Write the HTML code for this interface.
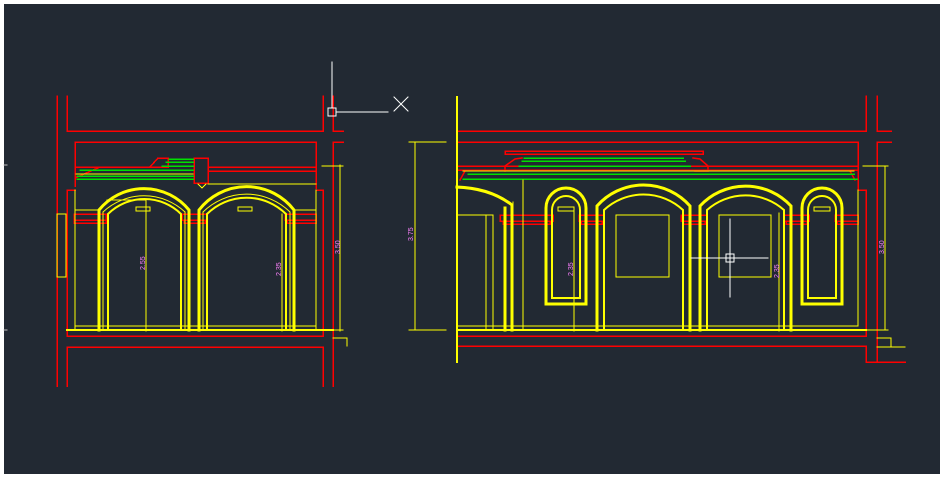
<!DOCTYPE html>
<html><head><meta charset="utf-8"><style>
html,body{margin:0;padding:0;background:#fff;}
svg{display:block}
text{font-family:"Liberation Sans",sans-serif;font-size:7px;fill:#ff80ff}
</style></head><body>
<svg width="944" height="478" viewBox="0 0 944 478" xmlns="http://www.w3.org/2000/svg">
<rect x="4" y="4" width="936" height="470" fill="#222933"/>
<g fill="none" stroke-linecap="square">
<g stroke="#ff0000" stroke-width="1.5" shape-rendering="crispEdges">
<line x1="57" y1="96" x2="57" y2="386"/>
<polyline points="67,96 67,131 323,131 323,96"/>
<polyline points="333,96 333,131 343,131"/>
<polyline points="75,186 75,142 316,142 316,188"/>
<polyline points="67,331 67,190 75,190"/>
<polyline points="316,190 323,190 323,336 67,336 67,331"/>
<polyline points="67,386 67,347 323,347 323,386"/>
<polyline points="343,142 333,142 333,386"/>
<polyline points="75,167 100,167 75,178 75,185"/>
<polyline points="100,167 150,167 158,158 168,158 168,167 150,167"/>
<polyline points="194,158 194,183 208,183 208,158 194,158"/>
<line x1="208" y1="167" x2="316" y2="167"/><line x1="208" y1="171" x2="316" y2="171"/>
<rect x="74" y="214" width="32" height="6"/><rect x="74" y="220" width="32" height="3"/>
<rect x="182" y="214" width="25" height="6"/><rect x="184" y="220" width="21" height="3"/>
<rect x="285" y="214" width="31" height="6"/><rect x="287" y="220" width="29" height="3"/>
</g>
<g stroke="#00e000" stroke-width="1.5" shape-rendering="crispEdges">
<line x1="169" y1="159" x2="193" y2="159"/><line x1="166" y1="162" x2="193" y2="162"/><line x1="162" y1="166" x2="193" y2="166"/>
<line x1="80" y1="170" x2="193" y2="170"/><line x1="77" y1="176" x2="193" y2="176"/><line x1="77" y1="179" x2="193" y2="179"/>
</g>
<g stroke="#ffff00" stroke-width="1" shape-rendering="crispEdges">
<line x1="76" y1="174" x2="193" y2="174"/><line x1="208" y1="184" x2="316" y2="184"/>
<polyline points="198,184 202,188 206,184"/>
<rect x="57" y="214" width="9" height="63"/>
<polyline points="75,190 75,330"/><polyline points="316,190 316,330"/>
<line x1="75" y1="210" x2="98" y2="210"/><line x1="294" y1="210" x2="316" y2="210"/>
<line x1="75" y1="326" x2="316" y2="326"/>
<rect x="136" y="207" width="14" height="4"/><rect x="238" y="207" width="14" height="4"/>
<line x1="146" y1="199" x2="146" y2="331"/><line x1="107" y1="200" x2="146" y2="200"/>
<line x1="282" y1="214" x2="282" y2="331"/>
<line x1="322" y1="166" x2="343" y2="166"/><line x1="322" y1="330" x2="343" y2="330"/>
<line x1="340" y1="165" x2="340" y2="331"/>
<polyline points="333,338 347,338 347,346"/>
<line x1="100" y1="229" x2="100" y2="330"/><line x1="188" y1="222" x2="188" y2="330"/>
<line x1="286" y1="222" x2="286" y2="330"/>
</g>
<g stroke="#ffff00" stroke-width="1">
<path d="M103,330 V212 A60 60 0 0 1 185,212 V330"/>
<path d="M203,330 V212 A62 62 0 0 1 290,212 V330"/>
</g>
<g stroke="#ffff00" stroke-width="3">
<path d="M99,330 V210 A58 58 0 0 1 189,210 V330" />
<path d="M199,330 V210 A60 60 0 0 1 294,210 V330" />
<path d="M108,330 V214 A52 52 0 0 1 181,214 V330" stroke-width="2"/>
<path d="M207,330 V214 A56 56 0 0 1 286,214 V330" stroke-width="2"/>
<line x1="67" y1="330" x2="333" y2="330" stroke-width="2"/>
</g>

<g stroke="#ff0000" stroke-width="1.5" shape-rendering="crispEdges">
<polyline points="457,131 866,131 866,96"/>
<polyline points="877,96 877,131 891,131"/>
<polyline points="457,142 858,142 858,190 866,190 866,336 457,336"/>
<polyline points="457,346 866,346 866,362 905,362"/>
<polyline points="891,142 877,142 877,362"/>
<rect x="505" y="151" width="198" height="3"/>
<line x1="457" y1="166" x2="858" y2="166"/><line x1="457" y1="170" x2="858" y2="170"/>
<rect x="500" y="215" width="53" height="6"/><rect x="503" y="221" width="47" height="3"/>
<rect x="579" y="215" width="25" height="6"/><rect x="581" y="221" width="21" height="3"/>
<rect x="681" y="215" width="26" height="6"/><rect x="683" y="221" width="22" height="3"/>
<rect x="784" y="215" width="25" height="6"/><rect x="786" y="221" width="21" height="3"/>
<rect x="835" y="215" width="23" height="6"/><rect x="837" y="221" width="21" height="3"/>
</g>
<g stroke="#ff0000" stroke-width="1.5">
<polyline points="460,180 465,171"/><polyline points="855,180 850,171"/>
<polyline points="505,171 505,166 515,159 522,158"/><polyline points="693,158 700,159 708,166 708,171 695,171"/>
</g>
<g stroke="#00e000" stroke-width="1.5" shape-rendering="crispEdges">
<line x1="524" y1="158" x2="683" y2="158"/><line x1="522" y1="161" x2="685" y2="161"/><line x1="519" y1="166" x2="690" y2="166"/>
<line x1="468" y1="174" x2="854" y2="174"/><line x1="463" y1="179" x2="857" y2="179"/>
</g>
<g stroke="#ffff00" stroke-width="1" shape-rendering="crispEdges">
<line x1="463" y1="171" x2="854" y2="171"/>
<line x1="523" y1="180" x2="523" y2="330"/>
<polyline points="457,215 493,215 493,330"/><line x1="486" y1="215" x2="486" y2="330"/>
<line x1="858" y1="190" x2="858" y2="326"/><line x1="457" y1="326" x2="858" y2="326"/>
<rect x="616" y="215" width="53" height="62"/><rect x="719" y="215" width="52" height="62"/>
<rect x="558" y="207" width="16" height="4"/><rect x="814" y="207" width="16" height="4"/>
<line x1="574" y1="210" x2="574" y2="331"/><line x1="779" y1="213" x2="779" y2="331"/>
<line x1="409" y1="142" x2="446" y2="142"/><line x1="409" y1="330" x2="446" y2="330"/>
<line x1="415" y1="142" x2="415" y2="330"/>
<line x1="863" y1="166" x2="888" y2="166"/><line x1="866" y1="330" x2="888" y2="330"/>
<line x1="885" y1="166" x2="885" y2="330"/>
<polyline points="877,338 891,338 891,347"/><line x1="877" y1="347" x2="905" y2="347"/>
<line x1="513" y1="202" x2="513" y2="330"/>
</g>
<g stroke="#ffff00" stroke-width="3">
<line x1="457" y1="97" x2="457" y2="362" stroke-width="2"/>
<path d="M457,187 Q490,188 512,205 V330"/>
<path d="M505,330 V208"/>
<path d="M546,304 V208 A20 20 0 0 1 586,208 V304 Z"/>
<path d="M552,298 V210 A14 14 0 0 1 580,210 V298 Z" stroke-width="2"/>
<path d="M597,330 V206 A62 62 0 0 1 690,206 V330"/>
<path d="M604,330 V210 A58 58 0 0 1 683,210 V330" stroke-width="2"/>
<path d="M700,330 V206 A62 62 0 0 1 791,206 V330"/>
<path d="M707,330 V210 A58 58 0 0 1 784,210 V330" stroke-width="2"/>
<path d="M802,304 V208 A20 20 0 0 1 842,208 V304 Z"/>
<path d="M808,298 V210 A14 14 0 0 1 836,210 V298 Z" stroke-width="2"/>
<line x1="457" y1="330" x2="866" y2="330" stroke-width="2"/>
</g>
<g stroke="#ffffff" stroke-width="1">
<line x1="332" y1="62" x2="332" y2="108"/><rect x="328" y="108" width="8" height="8"/>
<line x1="336" y1="112" x2="388" y2="112"/>
<line x1="394" y1="97" x2="408" y2="111"/><line x1="408" y1="97" x2="394" y2="111"/>
<line x1="730" y1="219" x2="730" y2="297"/><line x1="691" y1="258" x2="768" y2="258"/>
<rect x="726" y="254" width="8" height="8"/>
</g>
<g stroke="#c0c0c0"><line x1="4" y1="165" x2="7" y2="165"/><line x1="4" y1="330" x2="7" y2="330"/></g>
</g>
<text transform="translate(145,270) rotate(-90)">2.55</text>
<text transform="translate(281,276) rotate(-90)">2.35</text>
<text transform="translate(340,254) rotate(-90)">3.50</text>
<text transform="translate(413,241) rotate(-90)">3.75</text>
<text transform="translate(573,276) rotate(-90)">2.35</text>
<text transform="translate(779,278) rotate(-90)">2.35</text>
<text transform="translate(884,254) rotate(-90)">3.50</text>
</svg>
</body></html>
